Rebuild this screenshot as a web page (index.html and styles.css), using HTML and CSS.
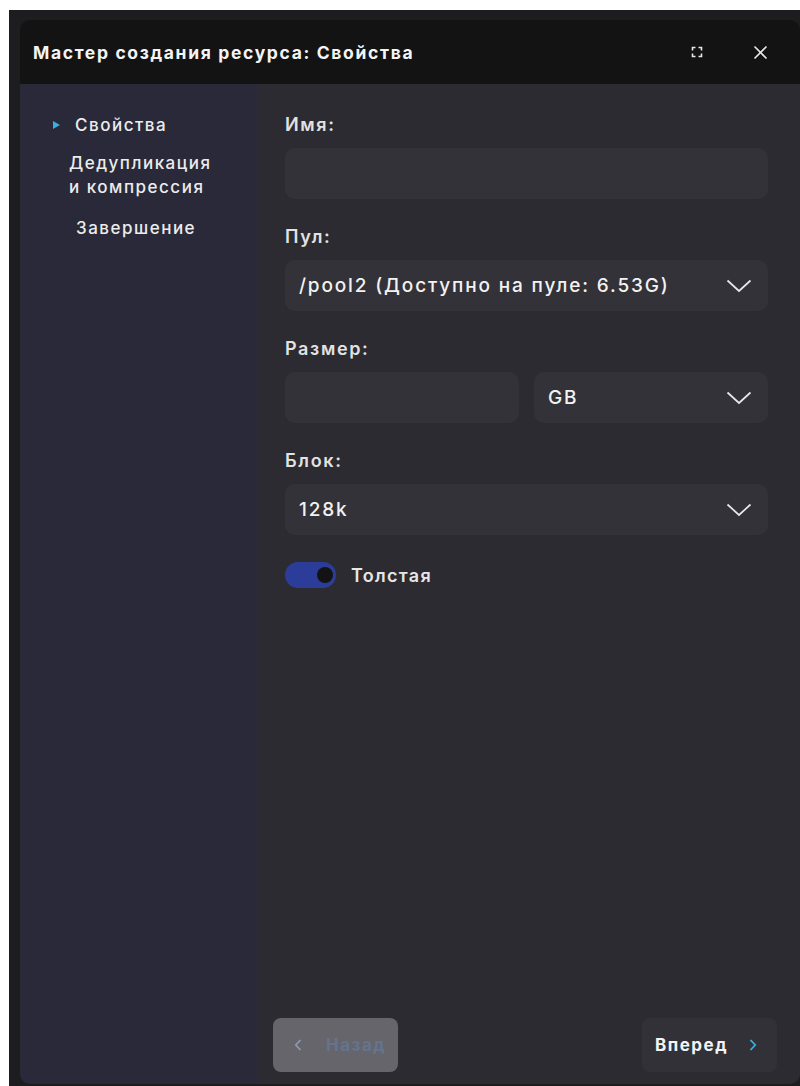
FILE: index.html
```html
<!DOCTYPE html>
<html lang="ru">
<head>
<meta charset="utf-8">
<title>Мастер создания ресурса</title>
<link rel="stylesheet" href="styles.css">
</head>
<body>
<div class="backdrop">
  <div class="dialog">
    <header class="dialog-head">
      <h1 class="dialog-title">Мастер создания ресурса: Свойства</h1>
      <div class="head-actions">
        <button class="icon-btn" aria-label="Развернуть">
          <svg width="14" height="14" viewBox="0 0 14 14" fill="none" stroke="#e8e8e8" stroke-width="1.6">
            <path d="M2.5 5.5v-3h3M8.5 2.5h3v3M11.5 8.5v3h-3M5.5 11.5h-3v-3"/>
          </svg>
        </button>
        <button class="icon-btn" aria-label="Закрыть">
          <svg width="15" height="15" viewBox="0 0 15 15" fill="none" stroke="#e8e8e8" stroke-width="1.6">
            <path d="M1.5 1.5l12 12M13.5 1.5l-12 12"/>
          </svg>
        </button>
      </div>
    </header>
    <div class="dialog-body">
      <nav class="steps">
        <div class="step step-active"><span class="step-mark"></span>Свойства</div>
        <div class="step step-two">Дедупликация<br>и компрессия</div>
        <div class="step step-three">Завершение</div>
      </nav>
      <main class="content">
        <div class="form">
          <div class="field">
            <label class="field-label">Имя:</label>
            <div class="control"></div>
          </div>
          <div class="field">
            <label class="field-label">Пул:</label>
            <div class="control select">
              <span>/pool2 (Доступно на пуле: 6.53G)</span>
              <svg class="chev" width="26" height="14" viewBox="0 0 26 14" fill="none" stroke="#e8e8e8" stroke-width="1.7"><path d="M1.5 1.5L13 12 24.5 1.5"/></svg>
            </div>
          </div>
          <div class="field">
            <label class="field-label">Размер:</label>
            <div class="pair">
              <div class="control"></div>
              <div class="control select">
                <span>GB</span>
                <svg class="chev" width="26" height="14" viewBox="0 0 26 14" fill="none" stroke="#e8e8e8" stroke-width="1.7"><path d="M1.5 1.5L13 12 24.5 1.5"/></svg>
              </div>
            </div>
          </div>
          <div class="field">
            <label class="field-label">Блок:</label>
            <div class="control select">
              <span>128k</span>
              <svg class="chev" width="26" height="14" viewBox="0 0 26 14" fill="none" stroke="#e8e8e8" stroke-width="1.7"><path d="M1.5 1.5L13 12 24.5 1.5"/></svg>
            </div>
          </div>
          <div class="toggle-row">
            <span class="toggle"><span class="knob"></span></span>
            <span class="toggle-label">Толстая</span>
          </div>
        </div>
        <div class="footer">
          <button class="nav-btn back" disabled>
            <svg width="8" height="14" viewBox="0 0 8 14" fill="none" stroke="#8b9ab0" stroke-width="1.8"><path d="M6.5 2L1.8 7l4.7 5"/></svg>
            <span>Назад</span>
          </button>
          <button class="nav-btn next">
            <span>Вперед</span>
            <svg width="8" height="14" viewBox="0 0 8 14" fill="none" stroke="#3aaee0" stroke-width="1.8"><path d="M1.5 2l4.7 5-4.7 5"/></svg>
          </button>
        </div>
      </main>
    </div>
  </div>
</div>
</body>
</html>
```
FILE: styles.css
```css
html, body {
  margin: 0;
  padding: 0;
  background: #ffffff;
}

body {
  font-family: "Inter", "Roboto", "Noto Sans", sans-serif;
  color: #e6e6e6;
}

/* dimmed page behind the modal */
.backdrop {
  margin: 10px 0 0 9px;
  height: 1076px;
  background: #1d1d1f;
  padding: 10px 0 2px 11px;
  box-sizing: border-box;
  overflow: hidden;
}

.dialog {
  height: 100%;
  display: flex;
  flex-direction: column;
  border-radius: 10px;
  overflow: hidden;
}

.dialog-head {
  height: 64px;
  flex: none;
  background: #131313;
  display: flex;
  align-items: center;
  justify-content: space-between;
  padding: 0 32px 0 13px;
}

.dialog-title {
  margin: 0;
  font-size: 17.5px;
  font-weight: 700;
  color: #f4f4f4;
  letter-spacing: 1.65px;
}

.head-actions {
  display: flex;
  align-items: center;
  gap: 49px;
}

.icon-btn {
  background: none;
  border: 0;
  padding: 0;
  display: flex;
  cursor: pointer;
}

.dialog-body {
  flex: 1;
  display: flex;
  min-height: 0;
}

/* wizard steps */
.steps {
  width: 237px;
  flex: none;
  background: #2a2939;
  padding-top: 30px;
  font-size: 17px;
  font-weight: 500;
  letter-spacing: 1.5px;
  color: #ececec;
}

.step-active {
  display: flex;
  align-items: center;
  padding-left: 33px;
  line-height: 22px;
  margin-bottom: 15px;
}

.step-mark {
  width: 0;
  height: 0;
  border-left: 7px solid #3aaee0;
  border-top: 4.5px solid transparent;
  border-bottom: 4.5px solid transparent;
  margin-right: 15px;
}

.step-two {
  padding-left: 49px;
  line-height: 24px;
  margin-bottom: 18px;
}

.step-three {
  padding-left: 56px;
  line-height: 22px;
}

/* form area */
.content {
  flex: 1;
  background: #2c2b31;
  display: flex;
  flex-direction: column;
  justify-content: space-between;
  padding: 30px 32px 12px 28px;
  min-width: 0;
}

.form {
  display: flex;
  flex-direction: column;
  gap: 27px;
}

.field {
  display: flex;
  flex-direction: column;
  gap: 12px;
}

.field-label {
  font-size: 18px;
  font-weight: 600;
  color: #e2e2e2;
  line-height: 22px;
  letter-spacing: 1.65px;
}

.control {
  height: 51px;
  border-radius: 10px;
  background: #333239;
  box-sizing: border-box;
}

.select {
  display: flex;
  align-items: center;
  justify-content: space-between;
  padding: 0 16px 0 14px;
  font-size: 19px;
  font-weight: 500;
  letter-spacing: 1.85px;
  color: #f2f2f2;
}

.pair {
  display: grid;
  grid-template-columns: 1fr 1fr;
  gap: 15px;
}

.toggle-row {
  display: flex;
  align-items: center;
  gap: 15px;
}

.toggle {
  width: 51px;
  height: 26px;
  border-radius: 13px;
  background: #2b3d99;
  display: flex;
  align-items: center;
  justify-content: flex-end;
  padding-right: 3px;
  box-sizing: border-box;
}

.knob {
  width: 16px;
  height: 16px;
  border-radius: 50%;
  background: #131313;
}

.toggle-label {
  font-size: 18px;
  font-weight: 600;
  letter-spacing: 1.3px;
  color: #e6e6e6;
}

/* wizard navigation */
.footer {
  display: flex;
  justify-content: space-between;
  margin-left: -12px;
  margin-right: -9px;
}

.nav-btn {
  height: 54px;
  border: 0;
  border-radius: 8px;
  display: flex;
  align-items: center;
  font-family: inherit;
  font-size: 17px;
  font-weight: 700;
  letter-spacing: 1.5px;
}

.back {
  width: 125px;
  padding-left: 21px;
  gap: 24px;
  background: #66656b;
  color: #62758f;
}

.next {
  width: 135px;
  padding-left: 13px;
  gap: 21px;
  background: #323137;
  color: #f4f4f4;
}
```
